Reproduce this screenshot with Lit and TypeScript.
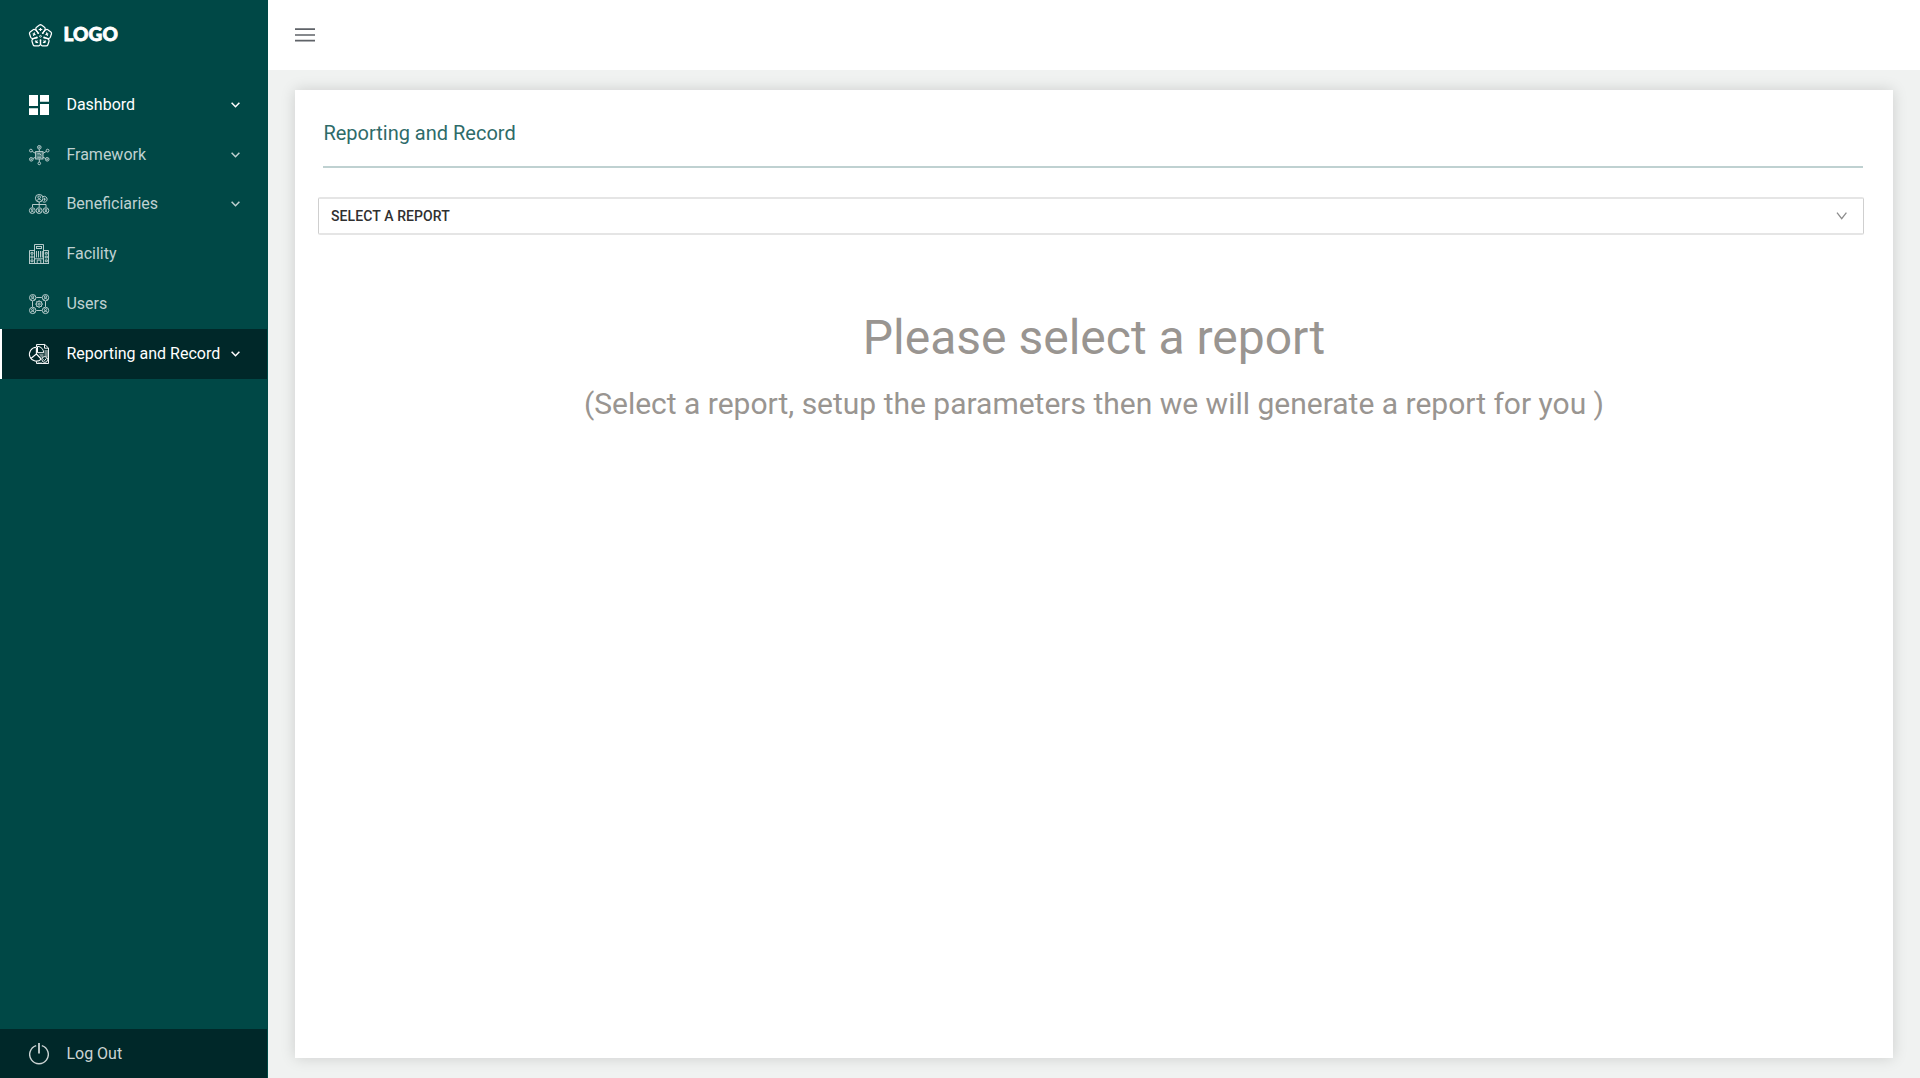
import { LitElement, html, svg, css, TemplateResult } from "lit";
import { customElement, property } from "lit/decorators.js";

const icons: Record<string, TemplateResult> = {
  dashboard: svg`<g fill="currentColor" stroke="none"><path d="M0 0h9v11H0zM0 13.3h9V20H0zM11 0h9v6.7h-9zM11 9h9v11h-9z"/></g>`,
  framework: svg`<rect x="6.6" y="6.6" width="7.4" height="7.4" fill="currentColor" fill-opacity=".35"/>
    <path d="M8.3 12.2h3.8M8.3 8.8h2.6l1.4 1.6"/>
    <path d="M10.3 4.2v2.4M10.3 14v3M3.2 6.4l3.4 2M17.3 6.4l-3.3 2M4 13.5l2.6-1.3M16.6 13.5L14 12.2"/>
    <circle cx="10.3" cy="2.3" r="1.8"/><circle cx="10.3" cy="2.3" r=".5"/>
    <circle cx="10.3" cy="18.4" r="1.3"/>
    <circle cx="1.9" cy="5.6" r="1.4"/><circle cx="18.6" cy="5.6" r="1.4"/>
    <circle cx="2.3" cy="14.3" r="1.8"/><circle cx="2.3" cy="14.3" r=".5"/>
    <circle cx="18.2" cy="14.3" r="1.8"/><circle cx="18.2" cy="14.3" r=".5"/>`,
  beneficiaries: svg`<circle cx="10.2" cy="4.2" r="3.8"/><circle cx="10.2" cy="3.2" r="1.3"/><path d="M7.9 6.9c.5-2.2 4.1-2.2 4.6 0"/>
    <path d="M14 2.6a2.9 2.9 0 1 1-.3 5.1M15.6 3.8v3M14.6 5.3h2"/>
    <path d="M10.2 8v5M3.5 13v-2.5h13.5V13"/>
    <circle cx="3.3" cy="16.6" r="2.9"/><circle cx="10.1" cy="16.6" r="2.9"/><circle cx="16.9" cy="16.6" r="2.9"/>
    <circle cx="3.3" cy="15.8" r=".9"/><circle cx="10.1" cy="15.8" r=".9"/><circle cx="16.9" cy="15.8" r=".9"/>
    <path d="M1.6 18.6c.4-1.5 3-1.5 3.4 0M8.4 18.6c.4-1.5 3-1.5 3.4 0M15.2 18.6c.4-1.5 3-1.5 3.4 0"/>`,
  facility: svg`<path d="M5.5 19.5V.5h9v19M.5 19.5v-13h5M14.5 6.5h5v13M0 19.5h20"/>
    <rect x="7.5" y="2.5" width="5" height="2"/><path d="M5.5 14.8h9"/>
    <path d="M7.5 7v6.5M9.5 7v6.5M11.5 7v6.5M13.3 7v6.5"/>
    <path d="M8.2 19.5v-3.4h3.6v3.4"/>
    <path d="M2 8.4h2v1.8H2zM2 12.1h2v1.8H2zM2 15.9h2v1.8H2zM16.3 8.4h2v1.8h-2zM16.3 12.1h2v1.8h-2zM16.3 15.9h2v1.8h-2z"/>`,
  users: svg`<circle cx="3.7" cy="3.7" r="3.2"/><circle cx="16.5" cy="3.7" r="3.2"/><circle cx="3.7" cy="16.4" r="3.2"/><circle cx="16.5" cy="16.4" r="3.2"/>
    <circle cx="3.7" cy="2.9" r="1.1"/><circle cx="16.5" cy="2.9" r="1.1"/><circle cx="3.7" cy="15.6" r="1.1"/><circle cx="16.5" cy="15.6" r="1.1"/>
    <path d="M1.7 5.9c.5-1.9 3.5-1.9 4 0M14.5 5.9c.5-1.9 3.5-1.9 4 0M1.7 18.6c.5-1.9 3.5-1.9 4 0M14.5 18.6c.5-1.9 3.5-1.9 4 0"/>
    <path d="M7.3 3.5h5.5M7.3 16.5h5.5M3.5 7.2v5.6M16.5 7.2v5.6"/>
    <circle cx="10.1" cy="10.1" r="2.9"/><circle cx="10.1" cy="10.1" r="1.1"/>
    <path d="M10.1 6.3v1M10.1 12.9v1M6.3 10.1h1M12.9 10.1h1M7.4 7.4l.7.7M12.1 12.1l.7.7M7.4 12.8l.7-.7M12.1 8.1l.7-.7"/>`,
  report: svg`<path d="M7.5 3V.5h8.3L19.5 4v15.5h-12v-2.2M15.5.5v3.7h4" />
    <path d="M15.5 6h3.5v7h-3.5z" fill="currentColor" fill-opacity=".45" stroke="none"/>
    <path d="M8.5 18h4.5v1H8.5z" fill="currentColor" fill-opacity=".4" stroke="none"/>
    <path d="M7.2 3.3a6.9 6.9 0 1 0 5 11.8" stroke-width="1.1"/>
    <path d="M7.4 3.4V10l-5.2 4.2M7.4 10l4.8 5" stroke-width="1.1"/>
    <path d="M8.5 2.3c3.8.3 6 2.9 6.2 6.4H8.5z" stroke-width="1"/>
    <path d="M10 10h4.5v4L12 13.6z" fill="currentColor" fill-opacity=".45" stroke="none"/>
    <circle cx="15.8" cy="15.5" r="2.9" fill="#002829"/><path d="M14.3 15.5l1.2 1.2 2-2.4"/>`,
};

@customElement("nav-item")
export class NavItem extends LitElement {
  @property() icon = "";
  @property() label = "";
  @property({ type: Boolean }) expandable = false;
  @property({ type: Boolean }) bright = false;
  @property({ type: Boolean }) active = false;

  static styles = css`
    :host { display: block; }
    .row {
      display: flex; align-items: center; height: 50px; box-sizing: border-box;
      border-left: 2px solid transparent; padding: 0 27px;
      color: #bfd1d1; font-size: 16px;
    }
    .row.bright { color: #fff; }
    .row.active { color: #fff; background: #002829; border-left-color: #fff; }
    .icon { width: 20px; height: 20px; flex: none; overflow: visible; stroke: currentColor; stroke-width: .95; fill: none; }
    .label { flex: 1; margin: -2px 0 0 17.4px; white-space: nowrap; }
    .chevron { width: 9px; height: 6px; flex: none; fill: none; stroke: currentColor; stroke-width: 1.5; }
  `;

  render() {
    return html`<div class="row ${this.bright ? "bright" : ""} ${this.active ? "active" : ""}">
      <svg class="icon" viewBox="0 0 20 20">${icons[this.icon]}</svg>
      <span class="label">${this.label}</span>
      ${this.expandable ? html`<svg class="chevron" viewBox="0 0 9 6"><path d="M.6.8l3.9 4L8.4.8"/></svg>` : ""}
    </div>`;
  }
}

@customElement("app-root")
export class AppRoot extends LitElement {
  static styles = css`
    :host { display: block; font-family: Roboto, "Liberation Sans", sans-serif; }
    .app { display: flex; width: 100%; height: 100vh; background: #f0f2f1; }
    .side { width: 267px; flex: none; display: flex; flex-direction: column; background: #004846; border-right: 1px solid #004846; }
    .brand { height: 70px; display: flex; align-items: center; padding-left: 29px; color: #fff; }
    .mark { width: 23px; height: 23px; fill: none; stroke: currentColor; stroke-width: 1.25; stroke-linejoin: round; overflow: visible; }
    .name { font: 900 19px/24px Lato, sans-serif; margin: -2px 0 0 11.5px; -webkit-text-stroke: .8px #fff; letter-spacing: .1px; }
    .menu { flex: 1; padding-top: 10px; }
    .tight { margin-bottom: -1px; }
    .logout { height: 49px; display: flex; align-items: center; padding-left: 29px; background: #002829; color: #ccd4d4; font-size: 16px; }
    .power { width: 20px; height: 22px; fill: none; stroke: currentColor; stroke-width: 1.4; margin-right: 17.4px; }
    .main { flex: 1; display: flex; flex-direction: column; }
    .top { height: 70px; background: #fff; display: flex; align-items: center; padding-left: 27px; }
    .burger { width: 20px; height: 14px; fill: none; stroke: #5f6368; stroke-width: 1.7; }
    .card { flex: 1; margin: 20px 27px 20px; background: #fff; box-shadow: 0 0 14px rgba(0, 0, 0, .15); }
    .title { margin: 0 30px 0 28px; box-sizing: border-box; padding: 31px 0 0 .4px; border-bottom: 2px solid #bfd1d1; height: 78px; font-size: 20px; line-height: 24px; color: #2e6b69; font-weight: 400; }
    .select { margin: 29px 29px 0 23px; height: 38px; box-sizing: border-box; border: 1px solid; border-width: 2px 1px; border-color: #e5e5e5 #cfcfcf; border-radius: 2px; display: flex; align-items: center; justify-content: space-between; padding: 0 16px 0 12px; font-size: 14px; letter-spacing: .1px; font-weight: 500; color: #303030; }
    .arrow { width: 11px; height: 8px; fill: none; stroke: #8c8c8c; stroke-width: 1.3; }
    .empty { text-align: center; color: #999591; }
    .lead { margin: 75px 0 0; font-size: 48px; line-height: 56px; font-weight: 400; }
    .hint { margin: 20px 0 0; font-size: 30px; line-height: 36px; white-space: nowrap; }
  `;

  render() {
    const petals = [0, 72, 144, 216, 288];
    return html`<div class="app">
      <nav class="side">
        <div class="brand">
          <svg class="mark" viewBox="-11.5 -11.5 23 23">
            ${petals.map((a) => svg`<g transform="translate(0 .8) rotate(${a})">
              <path d="M-1.4 -3L-2.4 -3.3L-4.6 -6.4Q-5 -8.6 -4 -9L-1 -11.2Q0 -11.9 1 -11.2L4 -9Q5 -8.6 4.6 -6.4L2.4 -3.3L1.4 -3"/>
              <path d="M-1.8 -6.8H1.8M0 -8.2V-5.2" stroke-width="1.2"/></g>`)}
            <circle cx="0" cy=".8" r=".9" stroke-width=".8"/>
          </svg>
          <span class="name">LOGO</span>
        </div>
        <div class="menu">
          <nav-item icon="dashboard" label="Dashbord" expandable bright></nav-item>
          <nav-item class="tight" icon="framework" label="Framework" expandable></nav-item>
          <nav-item icon="beneficiaries" label="Beneficiaries" expandable></nav-item>
          <nav-item icon="facility" label="Facility"></nav-item>
          <nav-item icon="users" label="Users"></nav-item>
          <nav-item icon="report" label="Reporting and Record" expandable active></nav-item>
        </div>
        <div class="logout">
          <svg class="power" viewBox="0 0 20 22"><path d="M7.2 2.6a9.3 9.3 0 1 0 5.6 0"/><path d="M10 0v10.5" stroke-width="1.8"/></svg>
          <span>Log Out</span>
        </div>
      </nav>
      <main class="main">
        <header class="top"><svg class="burger" viewBox="0 0 20 14"><path d="M0 1.2h20M0 7h20M0 12.6h20"/></svg></header>
        <section class="card">
          <h1 class="title">Reporting and Record</h1>
          <div class="select"><span>SELECT A REPORT</span>
            <svg class="arrow" viewBox="0 0 11 8"><path d="M1 .6l4.7 6L10.4.6"/></svg></div>
          <div class="empty">
            <h2 class="lead">Please select a report</h2>
            <p class="hint">(Select a report, setup the parameters then we will generate a report for you )</p>
          </div>
        </section>
      </main>
    </div>`;
  }
}
